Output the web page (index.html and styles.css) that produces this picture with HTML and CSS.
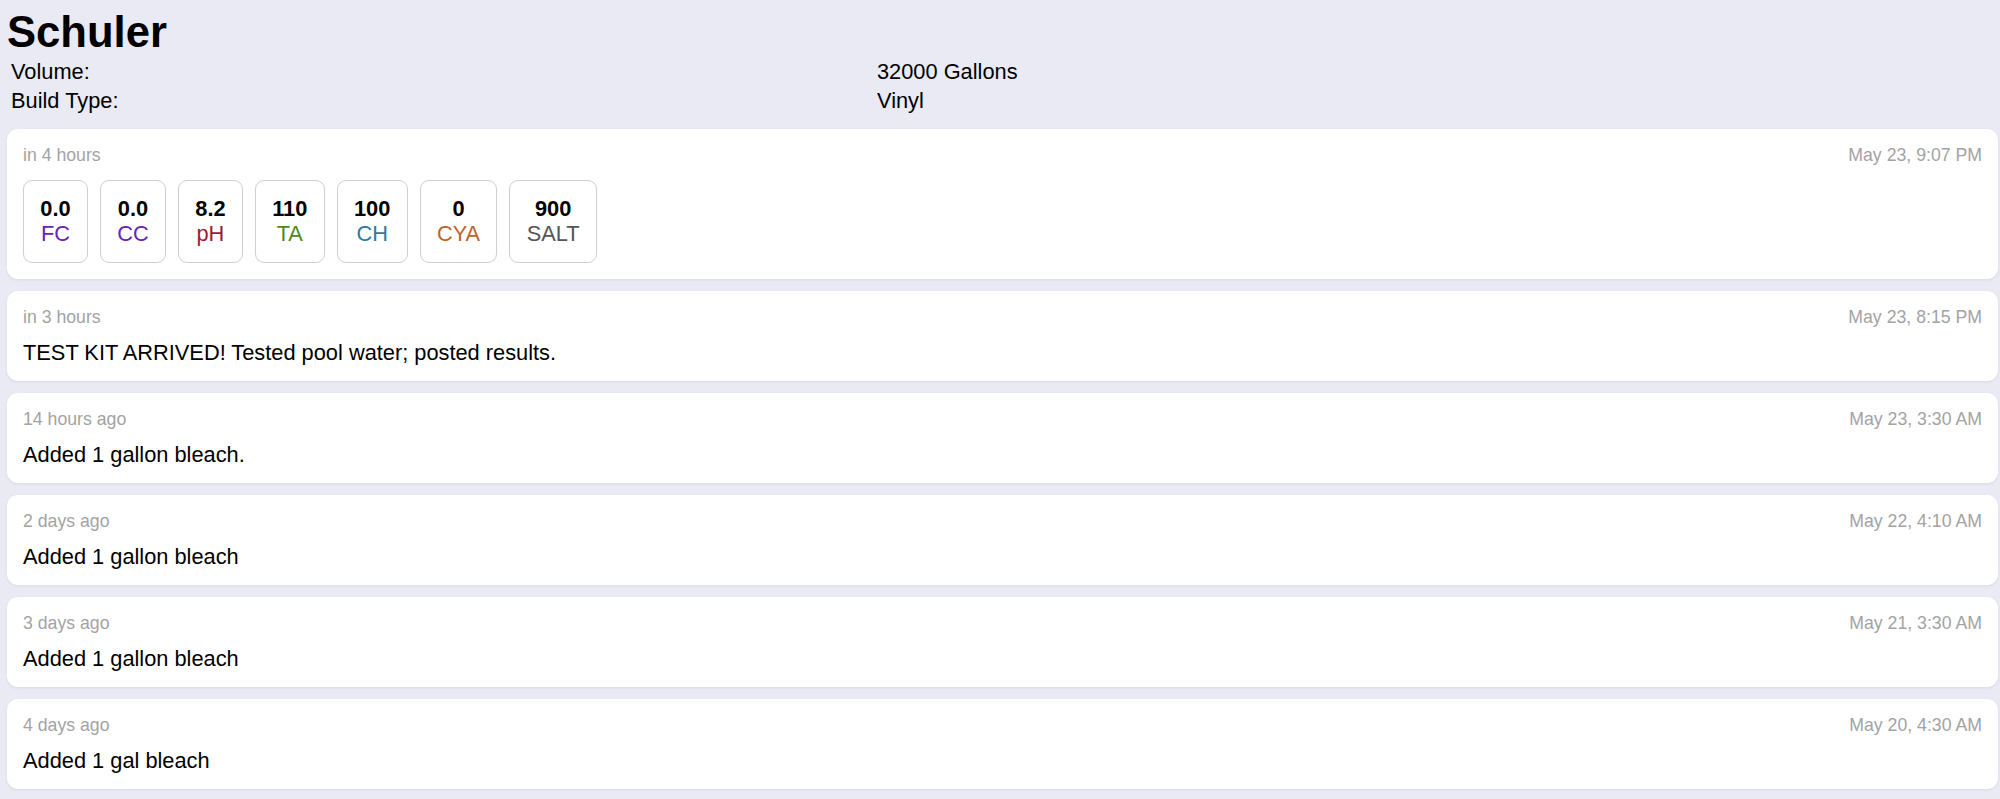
FILE: index.html
```html
<!DOCTYPE html>
<html lang="en">
<head>
<meta charset="utf-8">
<title>Schuler</title>
<link rel="stylesheet" href="styles.css">
</head>
<body>
<main class="page">
  <h1 class="title">Schuler</h1>
  <div class="meta">
    <div class="meta-label">Volume:</div>
    <div class="meta-value">32000 Gallons</div>
    <div class="meta-label">Build Type:</div>
    <div class="meta-value">Vinyl</div>
  </div>

  <section class="log">
    <article class="entry entry-tests">
      <header class="entry-head">
        <span class="rel">in 4 hours</span>
        <span class="abs">May 23, 9:07 PM</span>
      </header>
      <div class="chips">
        <div class="chip"><span class="chip-val">0.0</span><span class="chip-lbl c-fc">FC</span></div>
        <div class="chip"><span class="chip-val">0.0</span><span class="chip-lbl c-cc">CC</span></div>
        <div class="chip"><span class="chip-val">8.2</span><span class="chip-lbl c-ph">pH</span></div>
        <div class="chip"><span class="chip-val">110</span><span class="chip-lbl c-ta">TA</span></div>
        <div class="chip"><span class="chip-val">100</span><span class="chip-lbl c-ch">CH</span></div>
        <div class="chip"><span class="chip-val">0</span><span class="chip-lbl c-cya">CYA</span></div>
        <div class="chip"><span class="chip-val">900</span><span class="chip-lbl c-salt">SALT</span></div>
      </div>
    </article>

    <article class="entry">
      <header class="entry-head">
        <span class="rel">in 3 hours</span>
        <span class="abs">May 23, 8:15 PM</span>
      </header>
      <p class="note">TEST KIT ARRIVED! Tested pool water; posted results.</p>
    </article>

    <article class="entry">
      <header class="entry-head">
        <span class="rel">14 hours ago</span>
        <span class="abs">May 23, 3:30 AM</span>
      </header>
      <p class="note">Added 1 gallon bleach.</p>
    </article>

    <article class="entry">
      <header class="entry-head">
        <span class="rel">2 days ago</span>
        <span class="abs">May 22, 4:10 AM</span>
      </header>
      <p class="note">Added 1 gallon bleach</p>
    </article>

    <article class="entry">
      <header class="entry-head">
        <span class="rel">3 days ago</span>
        <span class="abs">May 21, 3:30 AM</span>
      </header>
      <p class="note">Added 1 gallon bleach</p>
    </article>

    <article class="entry">
      <header class="entry-head">
        <span class="rel">4 days ago</span>
        <span class="abs">May 20, 4:30 AM</span>
      </header>
      <p class="note">Added 1 gal bleach</p>
    </article>
  </section>
</main>
</body>
</html>
```

FILE: styles.css
```css
* { box-sizing: border-box; }

html, body {
  margin: 0;
  padding: 0;
  background: #e9eaf3;
}

body {
  font-family: "Liberation Sans", Arial, Helvetica, sans-serif;
  font-size: 21.8px;
  color: #000;
  overflow: hidden;
}

.page {
  padding: 7px 2px 10px 7px;
}

.title {
  margin: 0;
  font-size: 43.6px;
  font-weight: bold;
  line-height: 50px;
}

.meta {
  display: grid;
  grid-template-columns: 866px 1fr;
  row-gap: 4px;
  margin-top: 2px;
  padding-left: 4px;
  line-height: 25px;
}

.log {
  display: flex;
  flex-direction: column;
  gap: 12px;
  margin-top: 16px;
}

.entry {
  background: #fff;
  border-radius: 11px;
  padding: 16px;
  box-shadow: 0 1px 3px rgba(40, 44, 80, 0.08);
}

.entry-head {
  display: flex;
  justify-content: space-between;
  font-size: 17.7px;
  line-height: 21px;
  color: #a3a3a3;
}

.note {
  margin: 12px 0 0;
  line-height: 25px;
}

.chips {
  display: flex;
  gap: 12px;
  margin-top: 14px;
}

.chip {
  display: flex;
  flex-direction: column;
  align-items: center;
  padding: 16px 16.3px;
  border: 1px solid #cfcfcf;
  border-radius: 9px;
  line-height: 24.5px;
}

.chip-val { font-weight: bold; }

.c-fc, .c-cc { color: #6a22b3; }
.c-ph { color: #9a1c34; }
.c-ta { color: #4b8a24; }
.c-ch { color: #2f7aa0; }
.c-cya { color: #bf6426; }
.c-salt { color: #555; }
```
